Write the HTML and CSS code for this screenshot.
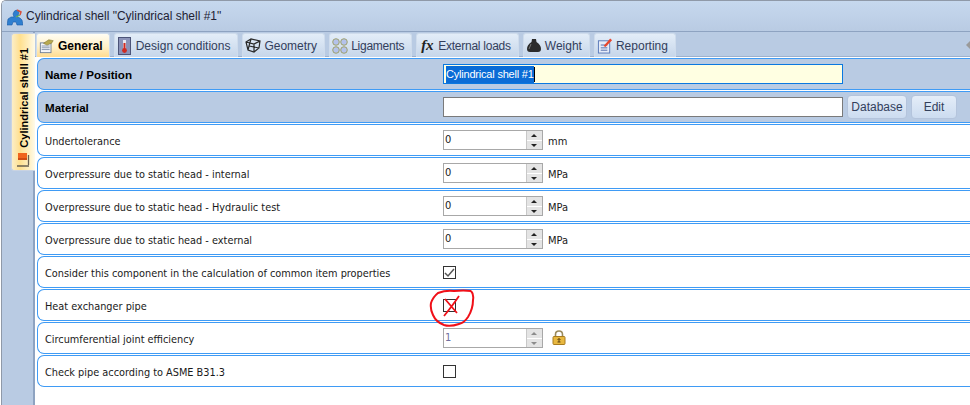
FILE: index.html
```html
<!DOCTYPE html>
<html lang="en">
<head>
  <meta charset="UTF-8">
  <title>Cylindrical shell</title>
  <link rel="stylesheet" href="styles.css">
</head>
<body>
  <div class="window">
    <div class="titlebar">
      <svg class="appicon" width="16" height="17" viewBox="0 0 16 17">
        <path d="M0 16 L1 10 L4 8 L7 8 L6 5 Q7 1 10 1 L12 3 L11 7 L10 8 L13 9 L15 11 L16 16 L10 16 L9 13 L6 13 L5 16 Z" fill="#2f7fd0" stroke="#1c5da8" stroke-width=".6"/>
        <path d="M10 1 L14 3 L13 6" fill="none" stroke="#d8503c" stroke-width="1.5"/>
        <path d="M9 8 L13 6" stroke="#6cb04a" stroke-width="1.3"/>
      </svg>
      <span>Cylindrical shell "Cylindrical shell #1"</span>
    </div>

    <div class="main">
      <div class="side">
        <div class="sidetab">
          <svg class="flag" width="16" height="18" viewBox="0 0 16 18">
            <path d="M2 2 H11 V9 H2 Z" fill="#f0641e"/>
            <path d="M2 7 H11 V9 H2 Z" fill="#cf4a12"/>
            <path d="M12.5 4 V14 M1 15 H13" fill="none" stroke="#6a6050" stroke-width="1.3"/>
          </svg>
          <span class="sidetext">Cylindrical shell #1</span>
        </div>
      </div>

      <div class="content">
        <div class="tabs">
          <div class="tab active">
            <svg width="16" height="16" viewBox="0 0 18 16">
              <rect x="1.5" y="4.5" width="12" height="11" fill="#f4f6fa" stroke="#6b7c94"/>
              <path d="M3 8 H12 M3 10 H12 M3 12 H12" stroke="#7e8ea6"/>
              <path d="M5 5 L11 1 L16 2 L14 5 L9 7 Z" fill="#b8a94e" stroke="#7c7230" stroke-width=".6"/>
            </svg>
            General
          </div>
          <div class="tab">
            <svg width="16" height="18" viewBox="-1 0 16 18">
              <rect x=".5" y=".5" width="12" height="17" fill="#8b93b8" stroke="#4c5478"/>
              <path d="M6.5 3 V12" stroke="#e8e8f0" stroke-width="3"/>
              <path d="M6.5 6 V13" stroke="#d02a20" stroke-width="2"/>
              <circle cx="6.5" cy="13.5" r="2.4" fill="#d02a20"/>
            </svg>
            Design conditions
          </div>
          <div class="tab">
            <svg width="16" height="15" viewBox="0 0 16 15">
              <path d="M1 4 L6 1 L15 3 L14 10 L9 14 L3 12 Z M1 4 L9 6 L15 3 M9 6 L9 14 M6 1 L4 8 L3 12 M4 8 L14 10" fill="none" stroke="#2a2a2a" stroke-width="1.2"/>
            </svg>
            Geometry
          </div>
          <div class="tab tight">
            <svg width="16" height="16" viewBox="0 0 18 18">
              <g fill="#b4c2ec" stroke="#9c9c5c">
                <circle cx="4.5" cy="4.5" r="3.7"/>
                <circle cx="13.5" cy="4.5" r="3.7"/>
                <circle cx="4.5" cy="13.5" r="3.7"/>
                <circle cx="13.5" cy="13.5" r="3.7"/>
              </g>
            </svg>
            Ligaments
          </div>
          <div class="tab tight">
            <span class="fx">fx</span>
            External loads
          </div>
          <div class="tab">
            <svg width="16" height="15" viewBox="0 0 16 15">
              <path d="M5.5 4 L6 1 H10 L10.5 4 Q15 7 15 11 Q15 14 12 14 H4 Q1 14 1 11 Q1 7 5.5 4 Z" fill="#2b2b2b"/>
              <path d="M5 6 L3 11" stroke="#777" stroke-width="1"/>
            </svg>
            Weight
          </div>
          <div class="tab">
            <svg width="16" height="17" viewBox="0 0 17 17">
              <rect x="1.5" y="3.5" width="12" height="13" fill="#e6ecf8" stroke="#5878b8"/>
              <path d="M4 8 H11 M4 11 H11 M4 13.5 H11" stroke="#4c68a8"/>
              <path d="M7 9 L14 1 L16 3 L9 10 Z" fill="#e8452c"/>
            </svg>
            Reporting
          </div>
          <div class="tabarrow"></div>
        </div>

        <div class="row head">
          <div class="label">Name / Position</div>
          <div class="textbox focused"><span class="selected">Cylindrical shell #1</span><span class="caret"></span></div>
        </div>
        <div class="row head">
          <div class="label">Material</div>
          <div class="textbox"></div>
          <div class="btn db">Database</div>
          <div class="btn edit">Edit</div>
        </div>

        <div class="row">
          <div class="label">Undertolerance</div>
          <div class="spin"><span class="val">0</span><div class="arrows"><i class="up"></i><i class="down"></i></div></div>
          <span class="unit">mm</span>
        </div>
        <div class="row">
          <div class="label">Overpressure due to static head - internal</div>
          <div class="spin"><span class="val">0</span><div class="arrows"><i class="up"></i><i class="down"></i></div></div>
          <span class="unit">MPa</span>
        </div>
        <div class="row">
          <div class="label">Overpressure due to static head - Hydraulic test</div>
          <div class="spin"><span class="val">0</span><div class="arrows"><i class="up"></i><i class="down"></i></div></div>
          <span class="unit">MPa</span>
        </div>
        <div class="row">
          <div class="label">Overpressure due to static head - external</div>
          <div class="spin"><span class="val">0</span><div class="arrows"><i class="up"></i><i class="down"></i></div></div>
          <span class="unit">MPa</span>
        </div>
        <div class="row">
          <div class="label">Consider this component in the calculation of common item properties</div>
          <div class="check">
            <svg width="11" height="11" viewBox="0 0 11 11"><path d="M1 6 L4 9 L10 2" fill="none" stroke="#555" stroke-width="1.5"/></svg>
          </div>
        </div>
        <div class="row">
          <div class="label">Heat exchanger pipe</div>
          <div class="check"></div>
        </div>
        <div class="row">
          <div class="label">Circumferential joint efficiency</div>
          <div class="spin disabled"><span class="val">1</span><div class="arrows"><i class="up"></i><i class="down"></i></div></div>
          <svg class="lock" width="14" height="15" viewBox="0 0 14 15">
            <path d="M3.5 7 V4.5 Q3.5 1 7 1 Q10.5 1 10.5 4.5 V7" fill="none" stroke="#9a8a5c" stroke-width="1.6"/>
            <rect x="1" y="6.5" width="12" height="8" rx="1" fill="#e8b840" stroke="#a87c20"/>
            <path d="M7 8.5 V12 M5.5 12 H8.5 M5.5 10 L7 8.5 L8.5 10" fill="none" stroke="#5c4210"/>
          </svg>
        </div>
        <div class="row">
          <div class="label">Check pipe according to ASME B31.3</div>
          <div class="check"></div>
        </div>
      </div>
    </div>

    <svg class="scribble" width="50" height="42" viewBox="0 0 50 42">
      <path d="M43 2 Q46 5 45 11 Q45 20 40 28 Q36 34 31 35 Q22 38 16 36 Q8 33 5 26 Q2 20 3 14 Q5 8 10 4 Q18 1 26 2 Q36 1 43 2" fill="none" stroke="#f01018" stroke-width="2"/>
      <path d="M17 10 L29 24 M31 7 Q25 16 16 27" fill="none" stroke="#f01018" stroke-width="1.8"/>
    </svg>
  </div>
</body>
</html>
```

FILE: styles.css
```css
html, body {
  margin: 0;
  padding: 0;
  height: 100%;
  overflow: hidden;
  background: #fff;
}
.window {
  position: relative;
  height: 405px;
  width: 970px;
  overflow: hidden;
  box-sizing: border-box;
  border-top: 1px solid #8f99a8;
  border-left: 1px solid #8f99a8;
  margin-left: 1px;
  border-top-left-radius: 5px;
  font-family: "Liberation Sans", Arial, sans-serif;
  font-size: 12px;
  color: #111;
  display: flex;
  flex-direction: column;
}
.titlebar {
  height: 30px;
  flex: none;
  display: flex;
  align-items: center;
  gap: 3px;
  padding-left: 5px;
  background: linear-gradient(#c6d8ee, #b9cbe3);
  border-bottom: 1px solid #8ea3c1;
  color: #223;
  font-size: 12px;
}
.appicon {
  margin-top: 3px;
}
.main {
  flex: 1;
  display: flex;
  min-height: 0;
}
.side {
  width: 33px;
  flex: none;
  box-sizing: border-box;
  background: #b9cbe3;
  border-right: 2px solid #8ea3c1;
  padding: 1px 0 0 9px;
  position: relative;
}
.sidetab {
  width: 24px;
  height: 138px;
  box-sizing: border-box;
  border-radius: 3px 0 0 3px;
  background: linear-gradient(90deg, #fbeec8, #ffe08f 35%, #fff0c4 75%, #fffbea);
  border: 1px solid #c9d3e2;
  border-right: 0;
  display: flex;
  flex-direction: column-reverse;
  align-items: center;
  justify-content: flex-start;
  padding-bottom: 1px;
  gap: 3px;
}
.sidetext {
  writing-mode: vertical-rl;
  transform: rotate(180deg);
  font-weight: bold;
  font-size: 11px;
  color: #000;
  white-space: nowrap;
}
.content {
  flex: 1;
  min-width: 0;
  padding-left: 2px;
  background: #fff;
}
.tabs {
  height: 25px;
  margin-left: -2px;
  padding-left: 1px;
  padding-top: 1px;
  box-sizing: border-box;
  background: #b9cbe3;
  border-bottom: 1px solid #9db1cd;
  display: flex;
  gap: 4px;
  position: relative;
}
.tab {
  box-sizing: border-box;
  height: 24px;
  display: flex;
  align-items: center;
  gap: 3px;
  padding: 0 7px 0 2px;
  border: 1px solid #cfdcec;
  border-bottom: 0;
  border-radius: 3px 3px 0 0;
  background: linear-gradient(#e3edf8, #c6d6ea);
  color: #33405c;
}
.tab svg {
  flex: none;
}
.tab.tight {
  letter-spacing: -.25px;
}
.tab.active {
  padding-right: 6px;
  background: linear-gradient(#fffdf3, #fff0c8 55%, #ffdc90);
  color: #000;
  font-weight: bold;
}
.fx {
  font-family: "Liberation Serif", serif;
  font-style: italic;
  font-weight: bold;
  font-size: 15px;
  width: 16px;
  text-align: center;
  color: #222;
}
.tabarrow {
  position: absolute;
  right: 0;
  top: 8px;
  width: 0;
  height: 0;
  border: 5px solid transparent;
  border-right-color: #9a9a9a;
  border-left: 0;
}
.row {
  box-sizing: border-box;
  height: 32px;
  width: 1000px;
  margin-top: 1px;
  display: flex;
  align-items: center;
  border: 1px solid #3f9bf5;
  border-right: 0;
  border-radius: 7px 0 0 7px;
  background: #fff;
}
.row.head {
  background: #b9cbe3;
}
.row.head .label {
  padding-top: 0;
  font-family: "Liberation Sans", Arial, sans-serif;
  font-stretch: normal;
  font-size: 11.6px;
  font-weight: bold;
  color: #000;
}
.label {
  width: 405px;
  flex: none;
  box-sizing: border-box;
  padding: 2px 0 0 7px;
  font-family: "DejaVu Sans", sans-serif;
  font-stretch: condensed;
  font-size: 10.85px;
  white-space: nowrap;
  color: #1a1a1a;
}
.textbox {
  width: 400px;
  height: 20px;
  box-sizing: border-box;
  flex: none;
  background: #fff;
  border: 1px solid #7a7a7a;
  display: flex;
  align-items: center;
  padding-left: 2px;
}
.textbox.focused {
  background: #ffffe2;
  border-color: #0a78e0;
}
.selected {
  background: #0a6cd6;
  color: #fff;
  font-size: 11px;
  letter-spacing: -.2px;
  line-height: 17px;
}
.caret {
  width: 1px;
  height: 15px;
  background: #000;
}
.btn {
  box-sizing: border-box;
  height: 24px;
  margin-left: 4px;
  display: flex;
  align-items: center;
  justify-content: center;
  border: 1px solid #b4c4dc;
  border-radius: 4px;
  background: linear-gradient(#e4edf8, #ccdcf0);
  color: #33405c;
}
.btn.db {
  width: 60px;
}
.btn.edit {
  width: 46px;
}
.spin {
  width: 100px;
  height: 20px;
  box-sizing: border-box;
  flex: none;
  display: flex;
  border: 1px solid #a8a8a8;
  background: #fff;
}
.val {
  flex: 1;
  padding-left: 1px;
  line-height: 17px;
  font-family: "DejaVu Sans", sans-serif;
  font-stretch: condensed;
  font-size: 11px;
  color: #1a1a1a;
}
.arrows {
  width: 15px;
  display: flex;
  flex-direction: column;
  border-left: 1px solid #c8c8c8;
}
.arrows i {
  flex: 1;
  position: relative;
  background: #e4e4e4;
}
.arrows i::after {
  content: "";
  position: absolute;
  left: 4px;
  top: 3px;
  border: 3.5px solid transparent;
}
.arrows .up {
  border-bottom: 1px solid #fff;
}
.arrows .up::after {
  top: 0;
  border-bottom-color: #222;
}
.arrows .down::after {
  top: 3px;
  border-top-color: #222;
}
.spin.disabled .val {
  color: #7070a0;
}
.spin.disabled .arrows i::after {
  opacity: .45;
}
.unit {
  margin-left: 5px;
  padding-top: 2px;
  font-family: "DejaVu Sans", sans-serif;
  font-stretch: condensed;
  font-size: 11px;
  color: #1a1a1a;
}
.lock {
  margin-left: 9px;
  margin-top: -2px;
}
.check {
  width: 13px;
  height: 13px;
  box-sizing: border-box;
  flex: none;
  border: 1px solid #333;
  background: #fff;
  display: flex;
  align-items: center;
  justify-content: center;
}
.scribble {
  position: absolute;
  left: 426px;
  top: 288px;
}
```
